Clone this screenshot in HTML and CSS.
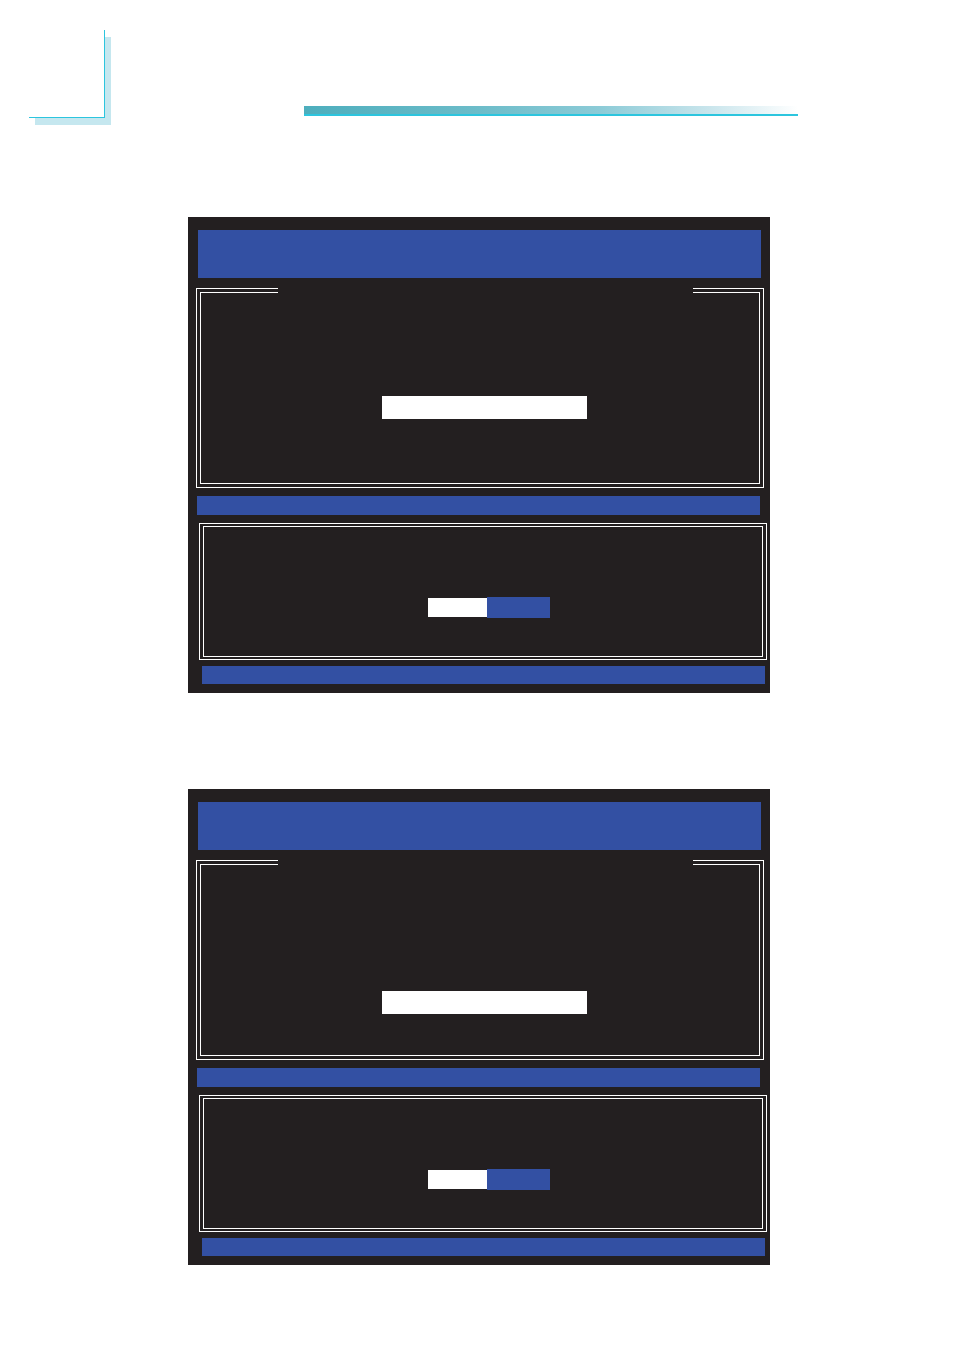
FILE: index.html
```
<!DOCTYPE html>
<html lang="en">
<head>
    <meta charset="UTF-8">
    <meta name="viewport" content="width=device-width, initial-scale=1.0">
    <title>RAID Utility: Create Volume</title>
    <link rel="stylesheet" href="styles.css">
</head>
<body>
    <div class="manual-head">
        <div class="corner-mark"></div>
        <div class="head-rule"></div>
    </div>

    <!-- Screen 1: volume name entry -->
    <div class="bios-screen">
        <div class="bios-title"></div>
        <div class="bios-dialog">
            <div class="dialog-inner">
                <div class="input-field"></div>
            </div>
        </div>
        <div class="status-bar"></div>
        <div class="confirm-box">
            <div class="confirm-inner">
                <div class="btn-row">
                    <div class="btn-yes"></div>
                    <div class="btn-no"></div>
                </div>
            </div>
        </div>
        <div class="help-bar"></div>
    </div>

    <!-- Screen 2: same dialog, field one row lower -->
    <div class="bios-screen second">
        <div class="bios-title"></div>
        <div class="bios-dialog">
            <div class="dialog-inner">
                <div class="input-field lower"></div>
            </div>
        </div>
        <div class="status-bar"></div>
        <div class="confirm-box">
            <div class="confirm-inner">
                <div class="btn-row">
                    <div class="btn-yes"></div>
                    <div class="btn-no"></div>
                </div>
            </div>
        </div>
        <div class="help-bar"></div>
    </div>
</body>
</html>
```

FILE: styles.css
```
* {
    box-sizing: border-box;
}

body {
    margin: 0;
    padding: 0;
    background: #ffffff;
    font-family: 'Liberation Sans', Arial, sans-serif;
    min-height: 1350px;
}

/* page header: corner mark + gradient rule */
.manual-head {
    display: flex;
    align-items: flex-start;
    padding-top: 30px;
    height: 118px;
}

.corner-mark {
    margin-left: 29px;
    width: 76px;
    height: 88px;
    border-right: 1px solid #2cc5de;
    border-bottom: 1px solid #2cc5de;
    box-shadow: 6px 7px 0 #c5e7ef;
}

.head-rule {
    margin-left: 199px;
    margin-top: 76px;
    width: 494px;
    height: 10px;
    background: linear-gradient(to right, #4daebd 0%, #6cbcc9 35%, #8ccbd7 60%, #c9e5ec 82%, #ffffff 100%);
    border-bottom: 2px solid #2cc5de;
}

/* BIOS screen */
.bios-screen {
    margin-top: 99px;
    margin-left: 188px;
    width: 582px;
    height: 476px;
    background: #231f20;
    padding-top: 13px;
    overflow: hidden;
}

.bios-screen.second {
    margin-top: 96px;
}

.bios-title {
    margin-left: 10px;
    width: 563px;
    height: 48px;
    background: #3350a3;
}

/* double frame, top line broken for the title */
.bios-dialog {
    margin-top: 10px;
    margin-left: 8px;
    width: 568px;
    padding: 4px 3px 3px 3px;
    border: 1px solid #ffffff;
    border-top: 0;
    background:
        linear-gradient(#ffffff, #ffffff) left top / 82px 1px no-repeat,
        linear-gradient(#ffffff, #ffffff) right top / 71px 1px no-repeat;
    background-origin: border-box;
}

.dialog-inner {
    height: 192px;
    border: 1px solid #ffffff;
    border-top: 0;
    background:
        linear-gradient(#ffffff, #ffffff) left top / 78px 1px no-repeat,
        linear-gradient(#ffffff, #ffffff) right top / 67px 1px no-repeat;
    background-origin: border-box;
    padding-top: 104px;
    padding-left: 181px;
}

.input-field {
    width: 205px;
    height: 23px;
    background: #ffffff;
}

.input-field.lower {
    margin-top: 23px;
}

.status-bar {
    margin-top: 8px;
    margin-left: 9px;
    width: 563px;
    height: 19px;
    background: #3350a3;
}

.confirm-box {
    margin-top: 8px;
    margin-left: 11px;
    width: 568px;
    height: 137px;
    border: 1px solid #ffffff;
    padding: 2px 3px;
}

.confirm-inner {
    height: 100%;
    border: 1px solid #ffffff;
    padding-top: 70px;
    padding-left: 224px;
}

.btn-row {
    display: flex;
    align-items: center;
}

.btn-yes {
    width: 59px;
    height: 19px;
    background: #ffffff;
}

.btn-no {
    width: 63px;
    height: 21px;
    background: #3350a3;
}

.help-bar {
    margin-top: 6px;
    margin-left: 14px;
    width: 563px;
    height: 18px;
    background: #3350a3;
}
```
